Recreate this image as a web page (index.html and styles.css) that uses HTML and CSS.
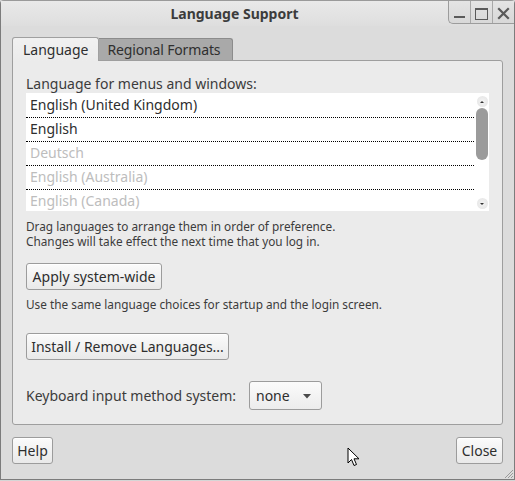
FILE: index.html
```
<!DOCTYPE html>
<html>
<head>
<meta charset="utf-8">
<link rel="stylesheet" href="styles.css">
</head>
<body>
<div class="window">
  <div class="titlebar">
    <div class="title">Language Support</div>
    <div class="controls">
      <div class="ctl"><svg width="21" height="23" viewBox="0 0 21 23"><rect x="5" y="16" width="11" height="2" fill="#5a5a5a"/></svg></div>
      <div class="ctl sep"><svg width="21" height="23" viewBox="0 0 21 23"><rect x="4.5" y="8.5" width="12" height="11" fill="none" stroke="#5a5a5a" stroke-width="1"/><rect x="5" y="8" width="11" height="2" fill="#5a5a5a"/></svg></div>
      <div class="ctl sep"><svg width="21" height="23" viewBox="0 0 21 23"><path d="M6 9 L15 18 M15 9 L6 18" stroke="#5a5a5a" stroke-width="2.2" stroke-linecap="square"/></svg></div>
    </div>
  </div>
  <div class="body">
    <div class="tabs">
      <div class="tab active">Language</div>
      <div class="tab">Regional Formats</div>
    </div>
    <div class="panel">
      <div class="label">Language for menus and windows:</div>
      <div class="list">
        <div class="rows">
          <div class="row">English (United Kingdom)</div>
          <div class="row">English</div>
          <div class="row dim">Deutsch</div>
          <div class="row dim">English (Australia)</div>
          <div class="row dim last">English (Canada)</div>
        </div>
        <div class="scroll">
          <div class="arrow"><svg width="10" height="10" viewBox="0 0 10 10"><path d="M3 6 L5 4 L7 6 Z" fill="#333"/></svg></div>
          <div class="thumb"></div>
          <div class="spacer"></div>
          <div class="arrow"><svg width="10" height="10" viewBox="0 0 10 10"><path d="M3 4 L7 4 L5 6 Z" fill="#333"/></svg></div>
        </div>
      </div>
      <div class="notes">
        <div class="note">Drag languages to arrange them in order of preference.</div>
        <div class="note">Changes will take effect the next time that you log in.</div>
      </div>
      <button class="btn apply">Apply system-wide</button>
      <div class="note single">Use the same language choices for startup and the login screen.</div>
      <button class="btn install">Install / Remove Languages...</button>
      <div class="kbrow">
        <span class="kblabel">Keyboard input method system:</span>
        <div class="combo"><span>none</span><svg width="10" height="6" viewBox="0 0 10 6"><path d="M1 1 L9 1 L5 5.5 Z" fill="#4a4a4a"/></svg></div>
      </div>
    </div>
    <div class="actions">
      <button class="btn help">Help</button>
      <button class="btn close">Close</button>
    </div>
  </div>
  <svg class="grip" width="12" height="12" viewBox="0 0 12 12"><path d="M11 3 L3 11 M11 6 L6 11 M11 9 L9 11" stroke="#9a9a9a" stroke-width="1"/></svg>
  <svg class="cursor" width="14" height="22" viewBox="0 0 14 22"><path d="M1 1 L1 16 L4.5 12.5 L7 18.5 L9.5 17.5 L7 11.8 L12 11.8 Z" fill="#fff" stroke="#000" stroke-width="1" stroke-linejoin="miter"/></svg>
</div>
</body>
</html>
```
FILE: styles.css
```
html, body {
  margin: 0;
  padding: 0;
}
body {
  width: 515px;
  height: 481px;
  background: #d6d6d6;
  font-family: "Noto Sans", "DejaVu Sans", sans-serif;
  color: #3c3c3c;
  overflow: hidden;
}
.window {
  position: relative;
  box-sizing: border-box;
  width: 515px;
  height: 480px;
  border: 1px solid #7c7c7c;
  border-top-color: #9a9a9a;
  border-radius: 4px 4px 0 0;
  background: #dcdcdc;
}
.titlebar {
  display: flex;
  height: 25px;
  background: linear-gradient(#e9e9e9, #dedede);
}
.title {
  flex: 1;
  text-align: center;
  padding-left: 20px;
  font-weight: bold;
  font-size: 14px;
  line-height: 25px;
  color: #3c3c3c;
}
.controls {
  display: flex;
  height: 22px;
  border-left: 1px solid #9c9c9c;
  border-bottom: 1px solid #9c9c9c;
  border-bottom-left-radius: 5px;
  background: linear-gradient(#e4e4e4, #d8d8d8);
}
.ctl {
  width: 21px;
  height: 22px;
}
.ctl svg { display: block; margin-top: -1px; }
.ctl.sep { border-left: 1px solid #a8a8a8; }
.body {
  padding: 11px 11px 0 11px;
}
.tabs {
  display: flex;
  align-items: flex-end;
  height: 24px;
  position: relative;
  z-index: 1;
}
.tab {
  box-sizing: border-box;
  font-size: 14px;
  line-height: 21px;
  height: 23px;
  padding: 0 11px;
  background: #a9a9a9;
  border: 1px solid #8c8c8c;
  border-bottom: none;
  border-radius: 3px 3px 0 0;
  color: #2f2f2f;
}
.tab:not(.active) {
  padding: 0 12px 0 8px;
  border-left: none;
  border-radius: 0 3px 0 0;
  margin-bottom: 1px;
  height: 22px;
  letter-spacing: -0.15px;
}
.tab.active {
  height: 24px;
  line-height: 24px;
  padding: 0 10px;
  background: linear-gradient(#f1f1f1, #ebebeb);
  border-color: #a0a0a0;
}
.panel {
  box-sizing: border-box;
  width: 491px;
  height: 365px;
  margin-top: -1px;
  border: 1px solid #9e9e9e;
  border-radius: 0 3px 3px 3px;
  background: #ebebeb;
  padding: 14px 13px 0 13px;
}
.label {
  font-size: 14px;
  line-height: 18px;
}
.list {
  display: flex;
  height: 118px;
  background: #fff;
  overflow: hidden;
}
.rows {
  flex: 1;
  padding-top: 1px;
}
.row {
  height: 23px;
  line-height: 21px;
  border-bottom: 1px dotted #000;
  padding-left: 4px;
  font-size: 14px;
  color: #2e2e2e;
}
.row.dim { color: #bdbdbd; }
.row.last { border-bottom: none; }
.scroll {
  width: 15px;
  display: flex;
  flex-direction: column;
  align-items: center;
  padding: 3px 0 2px 1px;
  box-sizing: border-box;
}
.arrow {
  width: 11px;
  height: 11px;
  border-radius: 50%;
  background: radial-gradient(#f4f4f4, #e2e2e2);
  display: flex;
  align-items: center;
  justify-content: center;
}
.arrow svg { display: block; }
.thumb {
  margin-top: 1px;
  width: 12px;
  height: 52px;
  border-radius: 6px;
  background: #9b9b9b;
}
.spacer { flex: 1; }
.notes {
  margin-top: 8px;
}
.note {
  font-size: 11.8px;
  line-height: 15px;
  height: 15px;
  color: #3c3c3c;
}
.note.single { margin-top: 7px; }
.btn {
  display: block;
  box-sizing: border-box;
  font-family: "Noto Sans", "DejaVu Sans", sans-serif;
  font-size: 14px;
  color: #2e2e2e;
  height: 27px;
  padding: 0 4px;
  border: 1px solid #9c9c9c;
  border-radius: 3px;
  background: linear-gradient(#fbfbfb, #e9e9e9);
  box-shadow: inset 0 1px 0 #ffffff;
}
.apply {
  margin-top: 14px;
  width: 136px;
}
.install {
  margin-top: 21px;
  width: 203px;
}
.kbrow {
  display: flex;
  align-items: center;
  margin-top: 21px;
  height: 29px;
}
.kblabel {
  font-size: 14px;
  width: 223px;
}
.combo {
  box-sizing: border-box;
  width: 73px;
  height: 29px;
  display: flex;
  align-items: center;
  justify-content: space-between;
  padding: 0 9px 0 6px;
  border: 1px solid #9c9c9c;
  border-radius: 3px;
  background: linear-gradient(#fbfbfb, #ececec);
  font-size: 14px;
  color: #2e2e2e;
}
.actions {
  display: flex;
  justify-content: space-between;
  width: 491px;
  margin-top: 12px;
}
.help { width: 41px; padding: 0; }
.close { width: 47px; padding: 0; }
.grip {
  position: absolute;
  right: 0;
  bottom: 0;
}
.cursor {
  position: absolute;
  left: 346px;
  top: 446px;
}
```
